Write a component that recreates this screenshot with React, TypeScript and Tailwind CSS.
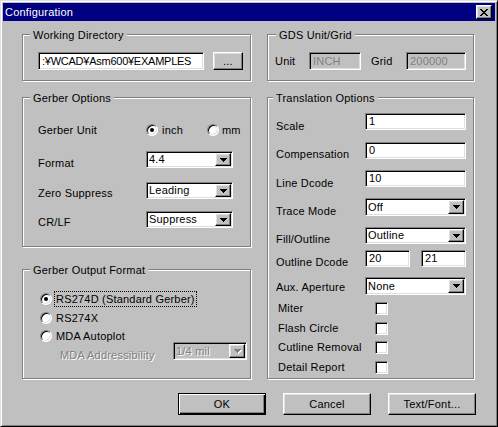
import type { ReactNode } from "react";

const sunken =
  "border border-t-[#808080] border-l-[#808080] border-b-white border-r-white shadow-[inset_1px_1px_0_#000,inset_-1px_-1px_0_#dfdfdf]";
const raised =
  "border border-t-white border-l-white border-b-black border-r-black shadow-[inset_-1px_-1px_0_#808080,inset_1px_1px_0_#dfdfdf]";
const disabledText = "text-[#808080] [text-shadow:1px_1px_0_#fff]";

function Group({
  label,
  labelLeft,
  className,
  children,
}: {
  label: string;
  labelLeft: string;
  className: string;
  children: ReactNode;
}) {
  return (
    <div className={`relative shrink-0 border border-[#808080] shadow-[inset_1px_1px_0_#fff,1px_1px_0_#fff] ${className}`}>
      <span className={`absolute top-[-6px] bg-[#c0c0c0] px-[3px] whitespace-nowrap ${labelLeft}`}>{label}</span>
      {children}
    </div>
  );
}

function Arrow({ disabled }: { disabled?: boolean }) {
  return (
    <svg
      width="7"
      height="4"
      viewBox="0 0 7 4"
      shapeRendering="crispEdges"
      className={disabled ? "drop-shadow-[1px_1px_0_#fff]" : ""}
    >
      <path d="M0 0h7v1H0zM1 1h5v1H1zM2 2h3v1H2zM3 3h1v1H3z" fill={disabled ? "#808080" : "#000"} />
    </svg>
  );
}

function Combo({ value, className, disabled }: { value: string; className: string; disabled?: boolean }) {
  return (
    <div className={`flex shrink-0 p-[1px] ${sunken} ${disabled ? "bg-[#c0c0c0]" : "bg-white"} ${className}`}>
      <div className={`flex-1 flex items-center pl-[1px] whitespace-nowrap overflow-hidden ${disabled ? disabledText : ""}`}>
        {value}
      </div>
      <div className={`w-[16px] h-full bg-[#c0c0c0] flex items-center justify-center ${raised}`}>
        <Arrow disabled={disabled} />
      </div>
    </div>
  );
}

function Field({ value, className, disabled }: { value: string; className: string; disabled?: boolean }) {
  return (
    <div
      className={`flex shrink-0 items-center pl-[3px] whitespace-nowrap overflow-hidden ${sunken} ${
        disabled ? "bg-[#c0c0c0] text-[#808080]" : "bg-white"
      } ${className}`}
    >
      {value}
    </div>
  );
}

function Radio({ checked }: { checked?: boolean }) {
  return (
    <span className="w-[12px] h-[12px] shrink-0 rounded-full bg-white border border-t-[#808080] border-l-[#808080] border-b-white border-r-white shadow-[inset_1px_1px_0_#000,inset_-1px_-1px_0_#dfdfdf] flex items-center justify-center">
      {checked && <span className="w-[4px] h-[4px] rounded-full bg-black" />}
    </span>
  );
}

function Check() {
  return <span className={`w-[13px] h-[13px] shrink-0 bg-white ${sunken}`} />;
}

function Button({ label, isDefault }: { label: string; isDefault?: boolean }) {
  const frame = isDefault
    ? "border border-black shadow-[inset_1px_1px_0_#fff,inset_-1px_-1px_0_#000,inset_-2px_-2px_0_#808080]"
    : raised;
  return (
    <button className={`w-[88px] h-[22px] bg-[#c0c0c0] flex items-center justify-center ${frame}`}>{label}</button>
  );
}

export default function App() {
  return (
    <div className="w-[498px] h-[427px] overflow-hidden bg-[#c0c0c0] border border-t-[#dfdfdf] border-l-[#dfdfdf] border-b-black border-r-black shadow-[inset_1px_1px_0_#fff,inset_-1px_-1px_0_#808080] p-[2px] font-['Liberation_Sans',Arial,sans-serif] text-[11px] leading-[13px] tracking-[0.2px] text-black select-none">
      {/* title bar */}
      <div className="h-[18px] bg-[#000080] flex items-center justify-between pl-[2px] pr-[3px]">
        <span className="text-white">Configuration</span>
        <button className={`w-[16px] h-[14px] bg-[#c0c0c0] flex items-center justify-center ${raised}`}>
          <svg width="8" height="7" viewBox="0 0 8 7" shapeRendering="crispEdges">
            <path d="M0 0h2v1H0zM6 0h2v1H6zM1 1h2v1H1zM5 1h2v1H5zM2 2h4v1H2zM3 3h2v1H3zM2 4h4v1H2zM1 5h2v1H1zM5 5h2v1H5zM0 6h2v1H0zM6 6h2v1H6z" />
          </svg>
        </button>
      </div>

      <div className="flex flex-col px-[19px] pt-[13px]">
        {/* row 1 */}
        <div className="flex gap-[16px]">
          <Group label="Working Directory" labelLeft="left-[7px]" className="w-[229px] h-[47px]">
            <div className="flex gap-[9px] pl-[15px] pt-[17px]">
              <Field value=":¥WCAD¥Asm600¥EXAMPLES" className="w-[166px] h-[18px] pl-[1px] tracking-[-0.25px]" />
              <button className={`w-[30px] h-[18px] bg-[#c0c0c0] flex items-center justify-center ${raised}`}>...</button>
            </div>
          </Group>
          <Group label="GDS Unit/Grid" labelLeft="left-[8px]" className="w-[207px] h-[47px]">
            <div className="flex items-center pl-[7px] pt-[17px]">
              <span className="w-[34px]">Unit</span>
              <Field value="INCH" disabled className="w-[52px] h-[18px]" />
              <span className="w-[45px] pl-[10px]">Grid</span>
              <Field value="200000" disabled className="w-[60px] h-[18px]" />
            </div>
          </Group>
        </div>

        {/* row 2 */}
        <div className="flex gap-[16px] mt-[16px]">
          <div className="flex flex-col w-[229px]">
            <Group label="Gerber Options" labelLeft="left-[7px]" className="h-[150px]">
              <div className="flex flex-col pl-[15px]">
                <div className="flex items-center h-[12px] mt-[26px]">
                  <span className="w-[108px]">Gerber Unit</span>
                  <Radio checked />
                  <span className="ml-[4px] w-[45px]">inch</span>
                  <Radio />
                  <span className="ml-[3px]">mm</span>
                </div>
                <div className="flex items-start h-[17px] mt-[15px]">
                  <span className="w-[108px] mt-[6px]">Format</span>
                  <Combo value="4.4" className="w-[87px] h-[17px]" />
                </div>
                <div className="flex items-start h-[17px] mt-[14px]">
                  <span className="w-[108px] mt-[5px]">Zero Suppress</span>
                  <Combo value="Leading" className="w-[87px] h-[17px]" />
                </div>
                <div className="flex items-start h-[17px] mt-[12px]">
                  <span className="w-[108px] mt-[5px]">CR/LF</span>
                  <Combo value="Suppress" className="w-[87px] h-[17px]" />
                </div>
              </div>
            </Group>

            <Group label="Gerber Output Format" labelLeft="left-[7px]" className="h-[110px] mt-[22px]">
              <div className="flex flex-col pl-[17px]">
                <div className="flex items-center h-[12px] mt-[23px]">
                  <Radio checked />
                  <span className="ml-[3px] px-[1px] leading-[14px] outline-1 outline-dotted outline-black">
                    RS274D (Standard Gerber)
                  </span>
                </div>
                <div className="flex items-center h-[12px] mt-[7px]">
                  <Radio />
                  <span className="ml-[4px]">RS274X</span>
                </div>
                <div className="flex items-center h-[12px] mt-[6px]">
                  <Radio />
                  <span className="ml-[4px]">MDA Autoplot</span>
                </div>
                <div className="flex items-start h-[18px]">
                  <span className={`ml-[20px] w-[113px] mt-[7px] ${disabledText}`}>MDA Addressibility</span>
                  <Combo value="1/4 mil" disabled className="w-[74px] h-[18px]" />
                </div>
              </div>
            </Group>
          </div>

          <Group label="Translation Options" labelLeft="left-[5px]" className="w-[207px] h-[282px]">
            <div className="flex flex-col pl-[8px]">
              <div className="flex items-start h-[17px] mt-[15px]">
                <span className="w-[89px] mt-[7px]">Scale</span>
                <Field value="1" className="w-[101px] h-[17px]" />
              </div>
              <div className="flex items-start h-[17px] mt-[12px]">
                <span className="w-[89px] mt-[6px]">Compensation</span>
                <Field value="0" className="w-[101px] h-[17px]" />
              </div>
              <div className="flex items-start h-[17px] mt-[11px]">
                <span className="w-[89px] mt-[7px]">Line Dcode</span>
                <Field value="10" className="w-[101px] h-[17px]" />
              </div>
              <div className="flex items-start h-[18px] mt-[11px]">
                <span className="w-[89px] mt-[7px]">Trace Mode</span>
                <Combo value="Off" className="w-[101px] h-[18px]" />
              </div>
              <div className="flex items-start h-[17px] mt-[11px]">
                <span className="w-[89px] mt-[6px]">Fill/Outline</span>
                <Combo value="Outline" className="w-[101px] h-[17px]" />
              </div>
              <div className="flex items-start h-[17px] mt-[6px]">
                <span className="w-[89px] mt-[6px]">Outline Dcode</span>
                <Field value="20" className="w-[45px] h-[17px]" />
                <Field value="21" className="w-[45px] h-[17px] ml-[11px]" />
              </div>
              <div className="flex items-start h-[18px] mt-[10px]">
                <span className="w-[89px] mt-[4px]">Aux. Aperture</span>
                <Combo value="None" className="w-[101px] h-[18px]" />
              </div>
              <div className="flex items-center h-[13px] mt-[7px]">
                <span className="ml-[2px] w-[97px]">Miter</span>
                <Check />
              </div>
              <div className="flex items-center h-[13px] mt-[7px]">
                <span className="ml-[2px] w-[97px]">Flash Circle</span>
                <Check />
              </div>
              <div className="flex items-center h-[13px] mt-[6px]">
                <span className="ml-[2px] w-[97px]">Cutline Removal</span>
                <Check />
              </div>
              <div className="flex items-center h-[13px] mt-[7px]">
                <span className="ml-[2px] w-[97px]">Detail Report</span>
                <Check />
              </div>
            </div>
          </Group>
        </div>

        {/* buttons */}
        <div className="flex justify-end gap-[17px] mt-[14px]">
          <Button label="OK" isDefault />
          <Button label="Cancel" />
          <Button label="Text/Font..." />
        </div>
      </div>
    </div>
  );
}
